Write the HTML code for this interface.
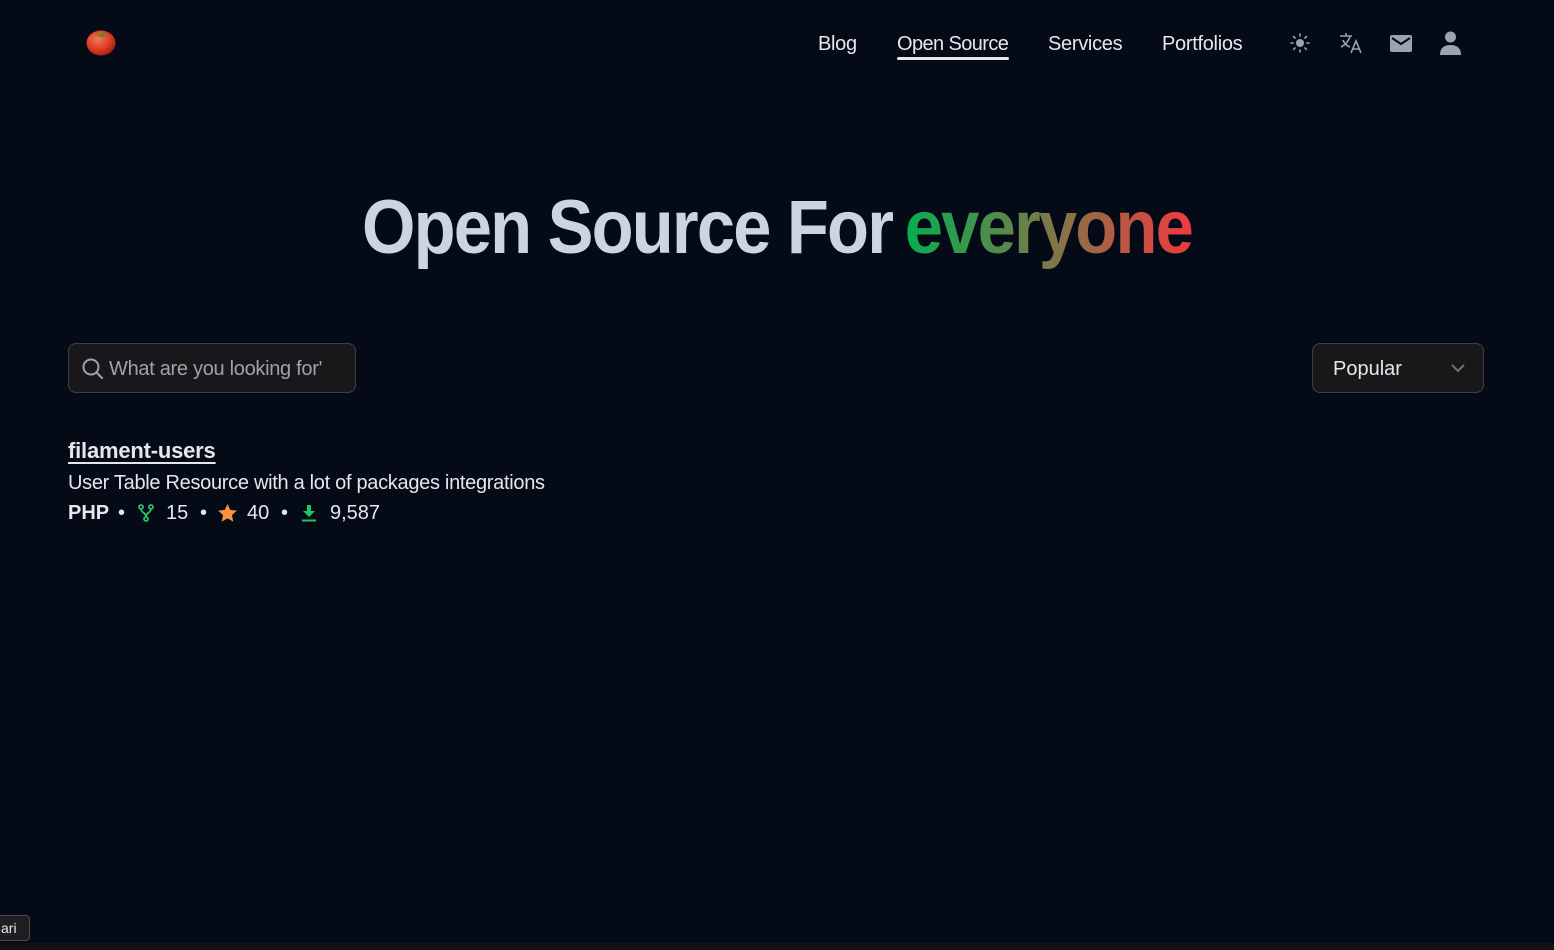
<!DOCTYPE html>
<html><head><meta charset="utf-8"><style>
*{margin:0;padding:0;box-sizing:border-box}
body{width:1554px;height:950px;background:#050a17;font-family:"Liberation Sans",sans-serif;color:#e5e7eb;position:relative;overflow:hidden}
.nav a{position:absolute;top:33px;font-size:20px;color:#e5e7eb;text-decoration:none;letter-spacing:-0.3px}
.box{position:absolute;background:#18181b;border:1px solid #3f3f46;border-radius:8px}
.t{position:absolute;white-space:nowrap}
</style></head><body>
<svg style="position:absolute;left:85px;top:27px" width="32" height="30" viewBox="0 0 32 30">
<defs><radialGradient id="tm" cx="0.4" cy="0.35" r="0.7"><stop offset="0" stop-color="#f47a55"/><stop offset="0.6" stop-color="#dc3a22"/><stop offset="1" stop-color="#9e1c10"/></radialGradient></defs>
<ellipse cx="16" cy="16" rx="14.5" ry="12.5" fill="url(#tm)"/>
<path d="M10 6 L16 8 L21 5 L19 9 L24 8 L17 10 L13 9 Z" fill="#3a9a2a"/>
</svg>
<div class="nav">
<a style="left:818px">Blog</a>
<a style="left:897px;letter-spacing:-0.6px">Open Source</a>
<a style="left:1048px">Services</a>
<a style="left:1162px">Portfolios</a>
</div>
<div style="position:absolute;left:897px;top:57px;width:112px;height:3px;background:#e5e7eb;border-radius:2px"></div>
<svg style="position:absolute;left:1290px;top:33px" width="20" height="20" viewBox="0 0 20 20" stroke="#9ca3af" stroke-width="1.6" stroke-linecap="round"><circle cx="10" cy="10" r="4" fill="#9ca3af" stroke="none"/><path d="M10 1v2M10 17v2M1 10h2M17 10h2M3.6 3.6l1.4 1.4M15 15l1.4 1.4M3.6 16.4L5 15M15 5l1.4-1.4"/></svg>
<svg style="position:absolute;left:1339px;top:32px" width="24" height="22" viewBox="0 0 24 22" fill="none" stroke="#9ca3af" stroke-width="1.6"><path d="M1 4h12M7 1v3M11 4c-1 5-5 9-9 11M4 8c1 3 4 6 7 7M12 21l5-12 5 12M14 17h6"/></svg>
<svg style="position:absolute;left:1390px;top:35px" width="22" height="17" viewBox="0 0 22 17"><rect width="22" height="17" rx="2" fill="#9ca3af"/><path d="M2 3l9 6 9-6" stroke="#050a17" stroke-width="2" fill="none"/></svg>
<svg style="position:absolute;left:1440px;top:31px" width="21" height="24" viewBox="0 0 21 24" fill="#9ca3af"><circle cx="10.5" cy="6" r="5.5"/><path d="M0 24c0-7 4-10 10.5-10S21 17 21 24z"/></svg>
<svg style="position:absolute;left:360px;top:180px" width="840" height="100">
<defs><linearGradient id="g" x1="538" x2="832" y1="0" y2="0" gradientUnits="userSpaceOnUse"><stop offset="0" stop-color="#00b050"/><stop offset="0.55" stop-color="#857448"/><stop offset="1" stop-color="#ef3a3e"/></linearGradient></defs>
<text x="2" y="73" font-family="Liberation Sans" font-weight="bold" font-size="76" textLength="830" lengthAdjust="spacingAndGlyphs" fill="#cbd5e1" letter-spacing="-2">Open Source For<tspan fill="url(#g)" dx="14">everyone</tspan></text>
</svg>
<div class="box" style="left:68px;top:343px;width:288px;height:50px"></div>
<svg style="position:absolute;left:81px;top:357px" width="24" height="24" viewBox="0 0 24 24" fill="none" stroke="#a1a1aa" stroke-width="2"><circle cx="10" cy="10" r="7.5"/><path d="M15.5 15.5L21 21" stroke-linecap="round"/></svg>
<div class="t" style="left:109px;top:358px;font-size:20px;color:#a1a1aa;letter-spacing:-0.3px">What are you looking for'</div>
<div class="box" style="left:1312px;top:343px;width:172px;height:50px"></div>
<div class="t" style="left:1333px;top:358px;font-size:20px;color:#e5e7eb">Popular</div>
<svg style="position:absolute;left:1450px;top:362px" width="16" height="12" viewBox="0 0 16 12" fill="none" stroke="#71717a" stroke-width="2"><path d="M2 3l6 6 6-6"/></svg>
<div class="t" style="left:68px;top:438px;font-size:22px;font-weight:bold;color:#e5e7eb;text-decoration:underline;text-underline-offset:4px;letter-spacing:-0.2px">filament-users</div>
<div class="t" style="left:68px;top:472px;font-size:20px;color:#e5e7eb;letter-spacing:-0.3px">User Table Resource with a lot of packages integrations</div>
<div class="t" style="left:68px;top:502px;font-size:20px;color:#e5e7eb">
<b>PHP</b>
<span style="position:absolute;left:50px;top:0">•</span>
<svg style="position:absolute;left:70px;top:2px" width="16" height="18" viewBox="0 0 16 18" fill="none" stroke="#22c55e" stroke-width="1.8"><circle cx="3" cy="3" r="2"/><circle cx="13" cy="3" r="2"/><circle cx="8" cy="15" r="2"/><path d="M3 5c0 4 5 3 5 8M13 5c0 4-5 3-5 8"/></svg>
<span style="position:absolute;left:98px;top:0">15</span>
<span style="position:absolute;left:132px;top:0">•</span>
<svg style="position:absolute;left:150px;top:2px" width="19" height="18" viewBox="0 0 24 23"><path d="M12 0l3.5 7.5 8.5 1-6.3 5.7 1.7 8.3L12 18.3 4.6 22.5l1.7-8.3L0 8.5l8.5-1z" fill="#fb923c"/></svg>
<span style="position:absolute;left:179px;top:0">40</span>
<span style="position:absolute;left:213px;top:0">•</span>
<svg style="position:absolute;left:233px;top:3px" width="16" height="17" viewBox="0 0 16 17" fill="#22c55e"><path d="M6 0h4v6h4l-6 6-6-6h4z"/><rect x="1" y="14.5" width="14" height="2"/></svg>
<span style="position:absolute;left:262px;top:0">9,587</span>
</div>
<div style="position:absolute;left:-6px;top:915px;width:36px;height:26px;background:#1f1f22;border:1px solid #4a4a4f;border-radius:4px;color:#e5e7eb;font-size:14px;padding:4px 0 0 6px">ari</div>
<div style="position:absolute;left:0;top:943px;width:1554px;height:7px;background:#121212"></div>
</body></html>
